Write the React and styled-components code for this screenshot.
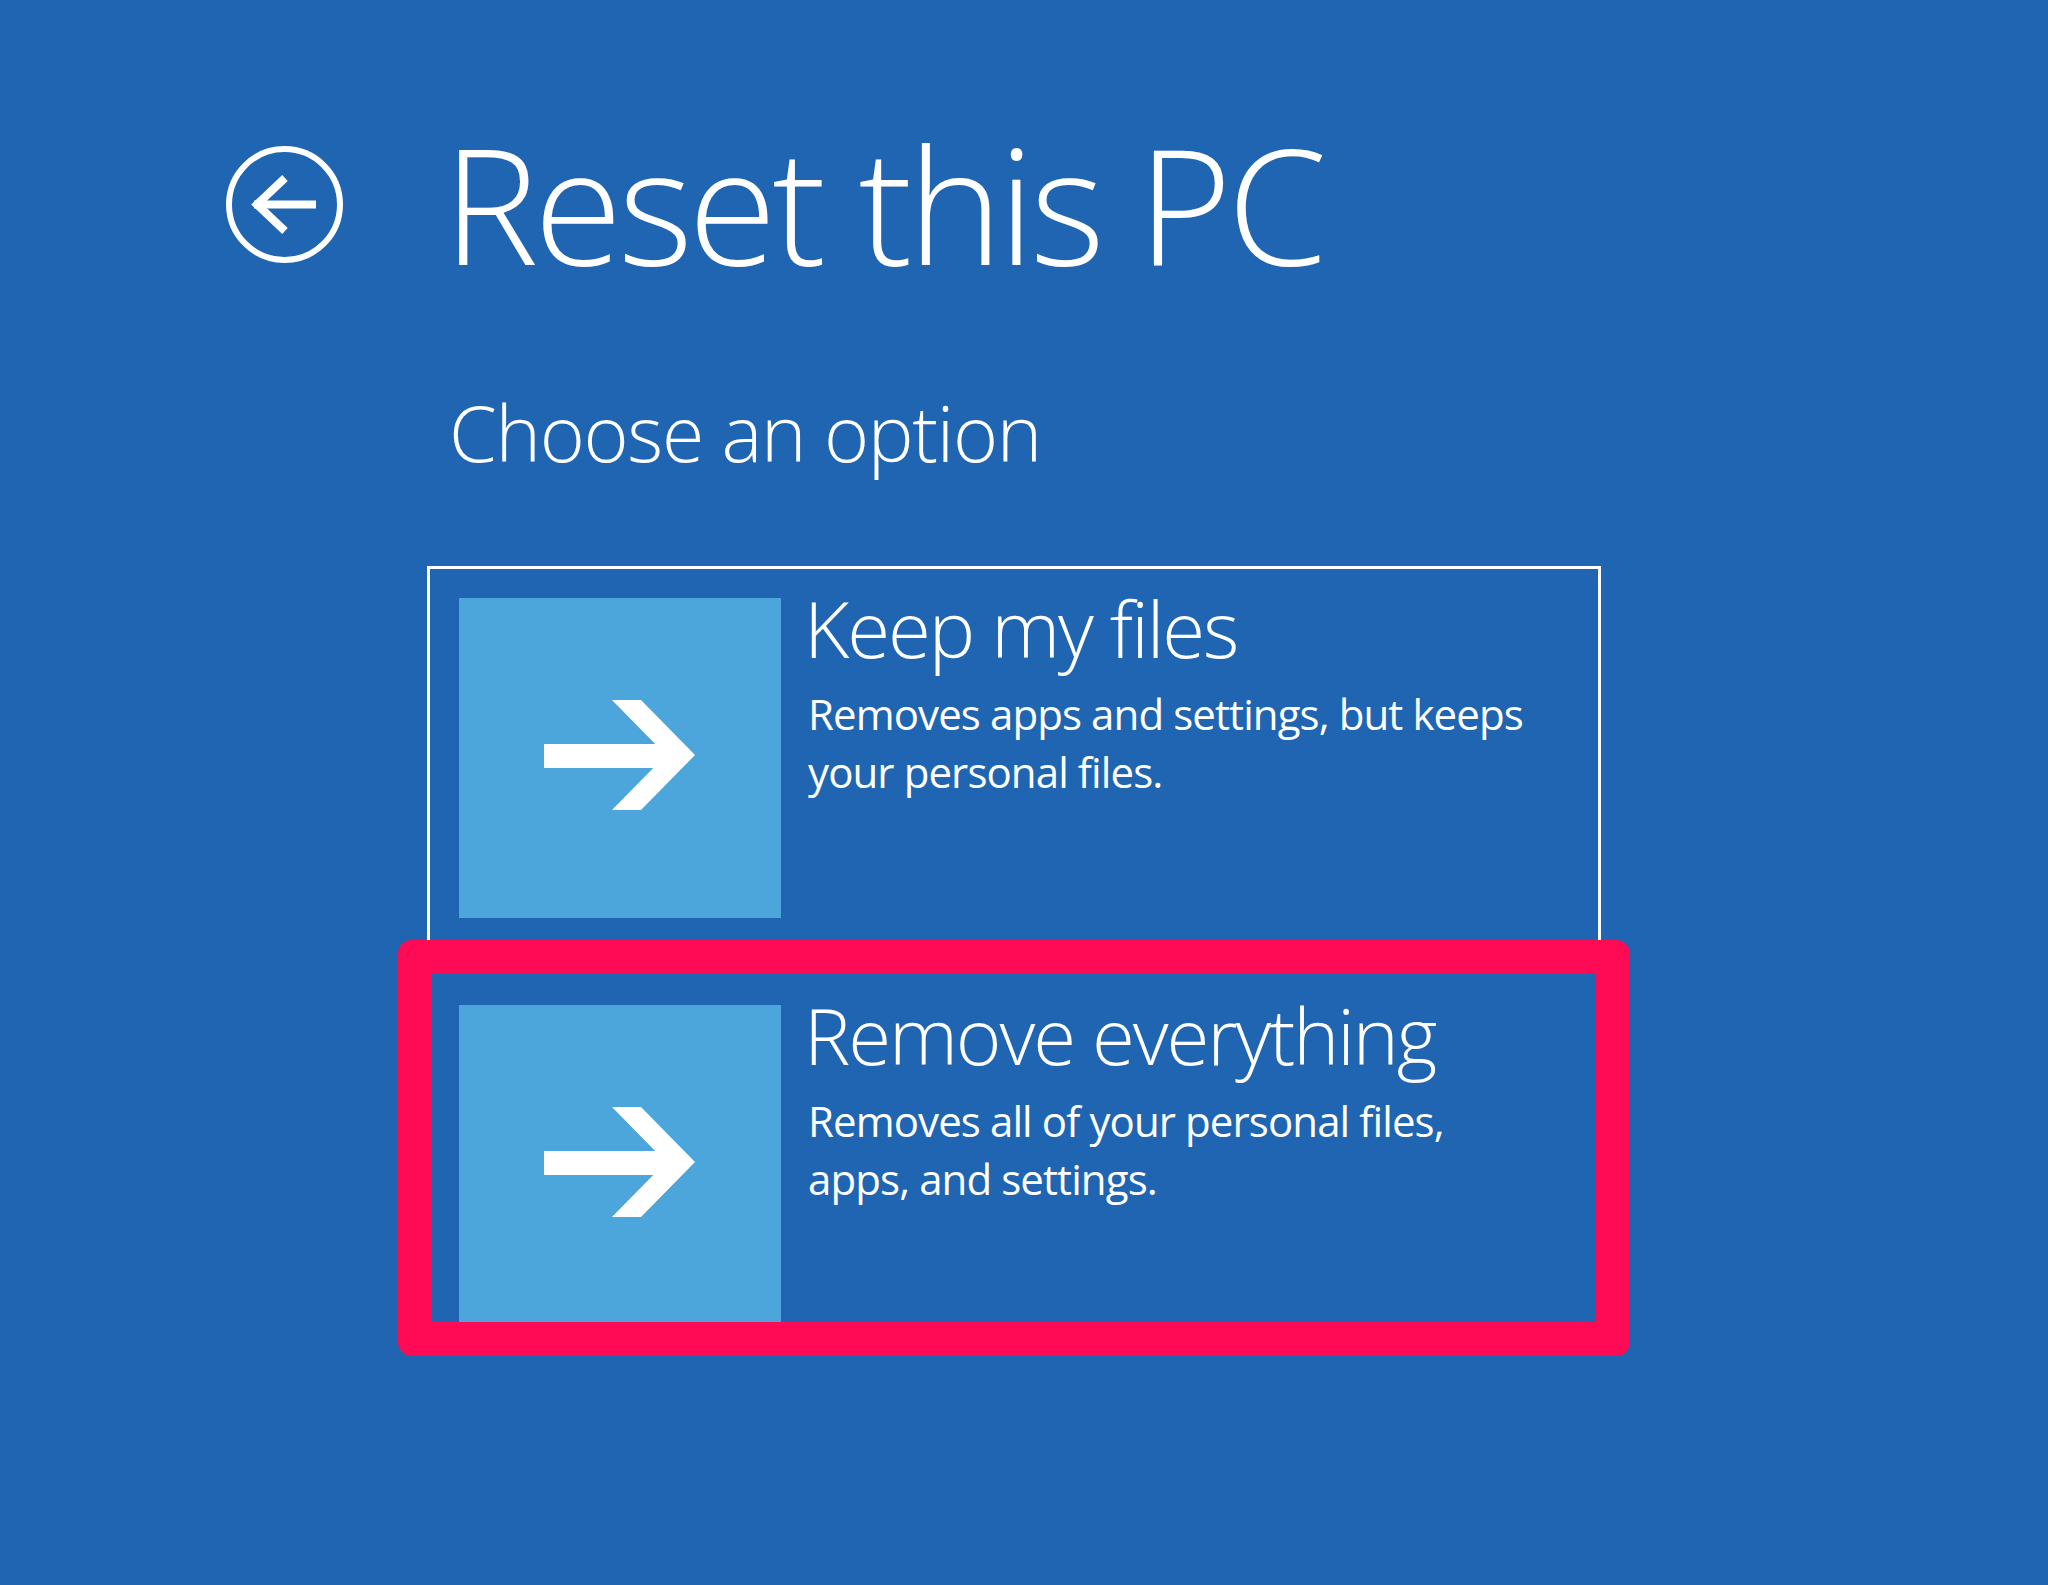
import React from 'react';
import styled, { createGlobalStyle } from 'styled-components';

const BLUE = '#1f65b2';
const TILE = '#4ca5db';
const MARK = '#ff0a55';

const GlobalStyle = createGlobalStyle`
  html, body {
    margin: 0;
    padding: 0;
    background: ${BLUE};
  }
  body {
    font-family: 'Open Sans', 'Noto Sans', 'Liberation Sans', sans-serif;
    color: #ffffff;
  }
`;

const Page = styled.main`
  width: 2048px;
  min-height: 1585px;
  box-sizing: border-box;
  padding: 126px 0 0 226px;
  background: ${BLUE};
`;

const Header = styled.header`
  display: flex;
  align-items: center;
`;

const BackButton = styled.button`
  width: 117px;
  height: 117px;
  padding: 0;
  border: 0;
  background: none;
  display: flex;
  cursor: pointer;
`;

const Title = styled.h1`
  margin: -4px 0 0 100px;
  font-size: 161px;
  font-weight: 300;
  line-height: 1;
  letter-spacing: -4.6px;
  color: #ffffff;
`;

const Content = styled.section`
  margin-left: 201px;
  width: 1174px;
`;

const Subtitle = styled.h2`
  margin: 111px 0 0 22px;
  font-size: 77px;
  font-weight: 300;
  line-height: 1;
  letter-spacing: -1.3px;
  color: #ffffff;
`;

const Options = styled.div`
  display: flex;
  flex-direction: column;
  margin-top: 95px;
`;

const Option = styled.div`
  position: relative;
  display: flex;
  align-items: flex-start;
  box-sizing: border-box;
  overflow: hidden;
  background: ${BLUE};
  border: ${({ $marked }) => ($marked ? `34px solid ${MARK}` : '3px solid #ffffff')};
  border-radius: ${({ $marked }) => ($marked ? '14px' : '0')};
  margin: ${({ $marked }) => ($marked ? '-10px -29px 0' : '0')};
  padding: ${({ $marked }) => ($marked ? '31px 27px 0' : '29px 29px')};
  height: ${({ $marked }) => ($marked ? '416px' : '384px')};
`;

const Tile = styled.div`
  flex: none;
  width: 322px;
  height: 320px;
  background: ${TILE};
  display: flex;
  align-items: center;
  justify-content: center;
`;

const Text = styled.div`
  margin-left: 23px;
`;

const OptionTitle = styled.div`
  font-size: 78px;
  font-weight: 300;
  line-height: 60px;
  letter-spacing: -2.1px;
  white-space: nowrap;
`;

const OptionDesc = styled.p`
  margin: 27px 0 0 4px;
  font-size: 42px;
  font-weight: 400;
  line-height: 58px;
  letter-spacing: -0.9px;
  white-space: nowrap;
`;

const BackIcon = () => (
  <svg width="117" height="117" viewBox="0 0 117 117" fill="none">
    <circle cx="58.5" cy="58.5" r="55.5" stroke="#fff" strokeWidth="6" />
    <path d="M28 58.5H90" stroke="#fff" strokeWidth="8" />
    <path d="M59 32L31 58.5L59 85" stroke="#fff" strokeWidth="8" />
  </svg>
);

const TileArrow = () => (
  <svg width="322" height="320" viewBox="0 0 322 320">
    <rect x="85" y="146" width="132" height="24" fill="#fff" />
    <polygon points="153,102 182,102 236,157 182,212 153,212 207,157" fill="#fff" />
  </svg>
);

const options = [
  {
    title: 'Keep my files',
    lines: ['Removes apps and settings, but keeps', 'your personal files.'],
  },
  {
    title: 'Remove everything',
    lines: ['Removes all of your personal files,', 'apps, and settings.'],
    marked: true,
  },
];

export default function App() {
  return (
    <>
      <GlobalStyle />
      <Page>
        <Header>
          <BackButton aria-label="Back">
            <BackIcon />
          </BackButton>
          <Title>Reset this PC</Title>
        </Header>
        <Content>
          <Subtitle>Choose an option</Subtitle>
          <Options>
            {options.map((o) => (
              <Option key={o.title} $marked={o.marked}>
                <Tile>
                  <TileArrow />
                </Tile>
                <Text>
                  <OptionTitle>{o.title}</OptionTitle>
                  <OptionDesc>
                    {o.lines[0]}
                    <br />
                    {o.lines[1]}
                  </OptionDesc>
                </Text>
              </Option>
            ))}
          </Options>
        </Content>
      </Page>
    </>
  );
}
